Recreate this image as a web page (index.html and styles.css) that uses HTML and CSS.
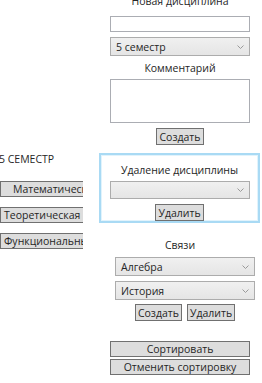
FILE: index.html
```html
<!DOCTYPE html>
<html lang="ru">
<head>
  <meta charset="UTF-8" />
  <title>Дисциплины</title>
  <link rel="stylesheet" href="styles.css">
</head>
<body>
  <div class="window">
    <!-- Left column: semester list -->
    <div class="semester">
      <div class="semester-title">5 СЕМЕСТР</div>
      <div class="subjects">
        <button class="subject subject-wide">Математическая логика</button>
        <button class="subject">Теоретическая механика</button>
        <button class="subject">Функциональный анализ</button>
      </div>
    </div>

    <!-- Right column: editing panel -->
    <div class="panel">
      <div class="new-subject">
        <div class="caption">Новая дисциплина</div>
        <input type="text" class="field" />
        <div class="combo"><span>5 семестр</span><svg width="7" height="4" viewBox="0 0 7 4"><path d="M0.5 0.5 L3.5 3.5 L6.5 0.5" fill="none" stroke="#9a9a9a" stroke-width="1"/></svg></div>
        <div class="caption caption-gap">Комментарий</div>
        <textarea class="field memo"></textarea>
        <button class="btn">Создать</button>
      </div>

      <div class="delete-box">
        <div class="caption">Удаление дисциплины</div>
        <div class="combo"><span></span><svg width="7" height="4" viewBox="0 0 7 4"><path d="M0.5 0.5 L3.5 3.5 L6.5 0.5" fill="none" stroke="#9a9a9a" stroke-width="1"/></svg></div>
        <button class="btn">Удалить</button>
      </div>

      <div class="links">
        <div class="caption">Связи</div>
        <div class="combo"><span>Алгебра</span><svg width="7" height="4" viewBox="0 0 7 4"><path d="M0.5 0.5 L3.5 3.5 L6.5 0.5" fill="none" stroke="#9a9a9a" stroke-width="1"/></svg></div>
        <div class="combo"><span>История</span><svg width="7" height="4" viewBox="0 0 7 4"><path d="M0.5 0.5 L3.5 3.5 L6.5 0.5" fill="none" stroke="#9a9a9a" stroke-width="1"/></svg></div>
        <div class="link-actions">
          <button class="btn">Создать</button>
          <button class="btn">Удалить</button>
        </div>
      </div>

      <div class="sorting">
        <button class="btn btn-full">Сортировать</button>
        <button class="btn btn-full">Отменить сортировку</button>
      </div>
    </div>
  </div>
</body>
</html>
```

FILE: styles.css
```css
* {
  margin: 0;
  padding: 0;
  box-sizing: border-box;
  font-family: 'Open Sans', 'Noto Sans', sans-serif;
}
body {
  background: #fff;
  color: #262626;
  font-size: 10.5px;
  width: 262px;
  height: 383px;
  overflow: hidden;
}
.window {
  display: grid;
  grid-template-columns: 99px 163px;
}
.semester {
  padding-top: 152px;
}
.semester-title {
  line-height: 14px;
  margin-left: -1px;
}
.subjects {
  display: flex;
  flex-direction: column;
  gap: 10px;
  margin-top: 15px;
  width: 83px;
  overflow: hidden;
}
.subject {
  width: 83px;
  height: 16px;
  background: #dddddd;
  border: 1px solid #707070;
  border-right: none;
  font-size: 10.5px;
  line-height: 14px;
  color: #262626;
  text-align: left;
  white-space: nowrap;
  overflow: hidden;
  padding-left: 3px;
}
.subject-wide {
  padding-left: 12px;
}
.panel {
  display: flex;
  flex-direction: column;
  margin-top: -6px;
}
.caption {
  text-align: center;
  line-height: 15px;
  height: 15px;
}
.new-subject {
  display: flex;
  flex-direction: column;
  align-items: center;
  width: 140px;
  margin-left: 11px;
}
.new-subject .caption {
  width: 140px;
}
.field {
  display: block;
  width: 140px;
  height: 16px;
  border: 1px solid #abadb3;
  background: #fff;
  margin-top: 7px;
  resize: none;
}
.memo {
  height: 44px;
  margin-top: 3px;
}
.combo {
  width: 140px;
  height: 19px;
  display: flex;
  align-items: center;
  justify-content: space-between;
  padding: 0 5px 0 5px;
  background: linear-gradient(#f0f0f0, #e5e5e5);
  border: 1px solid #acacac;
  margin-top: 5px;
}
.new-subject .caption-gap {
  margin-top: 5px;
}
.btn {
  display: block;
  background: #dddddd;
  border: 1px solid #707070;
  font-size: 10.5px;
  line-height: 14px;
  height: 16px;
  padding: 0 2px;
  color: #262626;
}
.new-subject .btn {
  margin-top: 5px;
  height: 17px;
}
.delete-box {
  display: flex;
  flex-direction: column;
  align-items: center;
  width: 161px;
  height: 70px;
  margin-top: 8px;
  padding-top: 8px;
  border: 2px solid #a9daf4;
  box-shadow: inset 0 0 0 1px #e1f3fc;
}
.delete-box .combo {
  margin-top: 3px;
}
.delete-box .btn {
  margin-top: 5px;
  height: 17px;
}
.links {
  display: flex;
  flex-direction: column;
  align-items: flex-start;
  margin-top: 15px;
}
.links .caption {
  width: 140px;
  margin-left: 11px;
}
.links .combo {
  margin-left: 16px;
  margin-top: 5px;
}
.links .caption + .combo {
  margin-top: 4px;
}
.link-actions {
  display: flex;
  justify-content: center;
  gap: 5px;
  width: 140px;
  margin-left: 16px;
  margin-top: 4px;
}
.link-actions .btn {
  height: 17px;
}
.sorting {
  display: flex;
  flex-direction: column;
  gap: 2px;
  width: 140px;
  margin-left: 11px;
  margin-top: 20px;
}
.btn-full {
  width: 140px;
  height: 16px;
}
```
